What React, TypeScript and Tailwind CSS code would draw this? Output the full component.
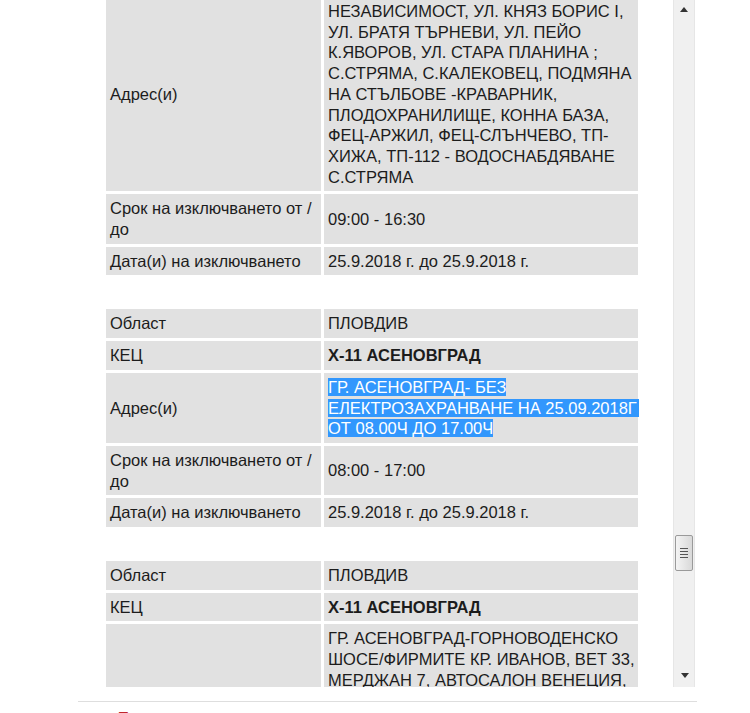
import React from "react";

const pageFont = { fontFamily: '"Liberation Sans", Arial, sans-serif' };

type Row = { label: React.ReactNode; value: React.ReactNode; bold?: boolean };

function Cell({ children, className = "" }: { children: React.ReactNode; className?: string }) {
  return (
    <div className={"flex items-center bg-[#e1e1e1] px-1 py-1 " + className}>
      <div>{children}</div>
    </div>
  );
}

function Lines({ lines }: { lines: string[] }) {
  return (
    <>
      {lines.map((l, i) => (
        <div key={i} className="whitespace-nowrap">
          {l}
        </div>
      ))}
    </>
  );
}

const term = <Lines lines={["Срок на изключването от /", "до"]} />;

function Outage({ rows }: { rows: Row[] }) {
  return (
    <div className="grid grid-cols-[215px_314px] gap-[3px]">
      {rows.map((r, i) => (
        <React.Fragment key={i}>
          <Cell>{r.label}</Cell>
          <Cell className={r.bold ? "font-bold" : ""}>{r.value}</Cell>
        </React.Fragment>
      ))}
    </div>
  );
}

function Scrollbar() {
  return (
    <div className="relative h-full w-[22px] border-x border-[#e6e6e6] bg-[#f0f0f0]">
      <div className="absolute left-[6px] top-[7px] h-0 w-0 border-x-[4px] border-b-[5px] border-x-transparent border-b-[#333]" />
      <div className="absolute left-[1px] top-[535px] flex h-[36px] w-[18px] flex-col items-center justify-center gap-[2px] rounded-[2px] border border-[#9a9a9a] bg-gradient-to-r from-[#f4f4f4] to-[#d9d9d9]">
        <div className="h-px w-[8px] bg-[#555]" />
        <div className="h-px w-[8px] bg-[#555]" />
        <div className="h-px w-[8px] bg-[#555]" />
        <div className="h-px w-[8px] bg-[#555]" />
      </div>
      <div className="absolute left-[7px] top-[673px] h-0 w-0 border-x-[4px] border-t-[5px] border-x-transparent border-t-[#333]" />
    </div>
  );
}

export default function App() {
  const sel = "bg-[#3297fd] text-white";
  return (
    <div className="h-[713px] w-[750px] overflow-hidden bg-white text-[16.5px] leading-[20.7px] text-[#1c1c1c]" style={pageFont}>
      <div className="ml-[78px] flex h-[687px] w-[619px]">
        <div className="h-full w-[595px] overflow-hidden pl-[28px]">
          <div className="mt-[-3px] flex flex-col gap-[34px]">
            <Outage
              rows={[
                {
                  label: "Адрес(и)",
                  value: (
                    <Lines
                      lines={[
                        "НЕЗАВИСИМОСТ, УЛ. КНЯЗ БОРИС I,",
                        "УЛ. БРАТЯ ТЪРНЕВИ, УЛ. ПЕЙО",
                        "К.ЯВОРОВ, УЛ. СТАРА ПЛАНИНА ;",
                        "С.СТРЯМА, С.КАЛЕКОВЕЦ, ПОДМЯНА",
                        "НА СТЪЛБОВЕ -КРАВАРНИК,",
                        "ПЛОДОХРАНИЛИЩЕ, КОННА БАЗА,",
                        "ФЕЦ-АРЖИЛ, ФЕЦ-СЛЪНЧЕВО, ТП-",
                        "ХИЖА, ТП-112 - ВОДОСНАБДЯВАНЕ",
                        "С.СТРЯМА",
                      ]}
                    />
                  ),
                },
                { label: term, value: "09:00 - 16:30" },
                { label: "Дата(и) на изключването", value: "25.9.2018 г. до 25.9.2018 г." },
              ]}
            />
            <Outage
              rows={[
                { label: "Област", value: "ПЛОВДИВ" },
                { label: "КЕЦ", value: "Х-11 АСЕНОВГРАД", bold: true },
                {
                  label: "Адрес(и)",
                  value: (
                    <>
                      <div className="whitespace-nowrap">
                        <span className={sel}>ГР. АСЕНОВГРАД- БЕЗ </span>
                      </div>
                      <div className="whitespace-nowrap">
                        <span className={sel + " pr-[2px]"}>ЕЛЕКТРОЗАХРАНВАНЕ НА 25.09.2018Г</span>
                      </div>
                      <div className="whitespace-nowrap">
                        <span className={sel}>ОТ 08.00Ч ДО 17.00Ч</span>
                      </div>
                    </>
                  ),
                },
                { label: term, value: "08:00 - 17:00" },
                { label: "Дата(и) на изключването", value: "25.9.2018 г. до 25.9.2018 г." },
              ]}
            />
            <Outage
              rows={[
                { label: "Област", value: "ПЛОВДИВ" },
                { label: "КЕЦ", value: "Х-11 АСЕНОВГРАД", bold: true },
                {
                  label: "",
                  value: (
                    <Lines
                      lines={[
                        "ГР. АСЕНОВГРАД-ГОРНОВОДЕНСКО",
                        "ШОСЕ/ФИРМИТЕ КР. ИВАНОВ, ВЕТ 33,",
                        "МЕРДЖАН 7, АВТОСАЛОН ВЕНЕЦИЯ,",
                      ]}
                    />
                  ),
                },
              ]}
            />
          </div>
        </div>
        <Scrollbar />
      </div>
      <div className="ml-[78px] mt-[14px] w-[619px] border-t border-[#dedede]" />
      <div className="ml-[118px] mt-[5px] text-[15px] font-bold text-[#c0272d]">Предишни изключвания</div>
    </div>
  );
}
